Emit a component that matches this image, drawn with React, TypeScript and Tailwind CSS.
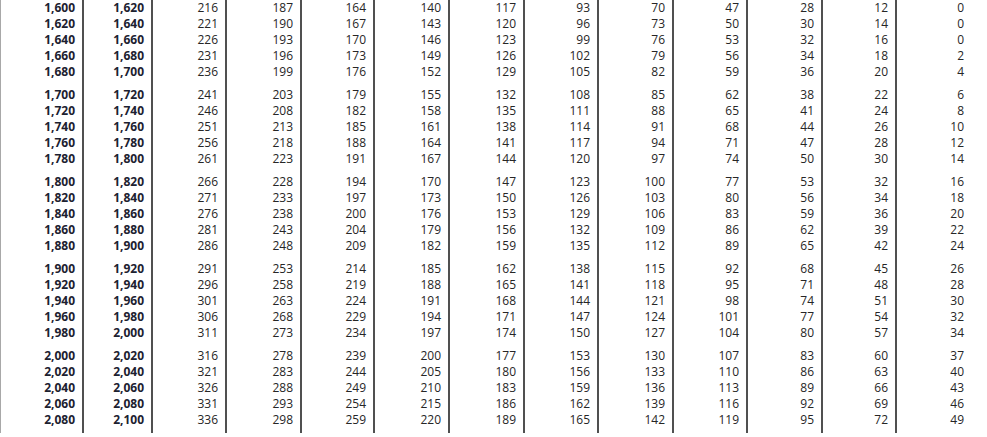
import React from "react";

// rows of the tax table: at least, but less than, then amounts per column
const rows: string[][] = [
  ["1,600", "1,620", "216", "187", "164", "140", "117", "93", "70", "47", "28", "12", "0"],
  ["1,620", "1,640", "221", "190", "167", "143", "120", "96", "73", "50", "30", "14", "0"],
  ["1,640", "1,660", "226", "193", "170", "146", "123", "99", "76", "53", "32", "16", "0"],
  ["1,660", "1,680", "231", "196", "173", "149", "126", "102", "79", "56", "34", "18", "2"],
  ["1,680", "1,700", "236", "199", "176", "152", "129", "105", "82", "59", "36", "20", "4"],
  ["1,700", "1,720", "241", "203", "179", "155", "132", "108", "85", "62", "38", "22", "6"],
  ["1,720", "1,740", "246", "208", "182", "158", "135", "111", "88", "65", "41", "24", "8"],
  ["1,740", "1,760", "251", "213", "185", "161", "138", "114", "91", "68", "44", "26", "10"],
  ["1,760", "1,780", "256", "218", "188", "164", "141", "117", "94", "71", "47", "28", "12"],
  ["1,780", "1,800", "261", "223", "191", "167", "144", "120", "97", "74", "50", "30", "14"],
  ["1,800", "1,820", "266", "228", "194", "170", "147", "123", "100", "77", "53", "32", "16"],
  ["1,820", "1,840", "271", "233", "197", "173", "150", "126", "103", "80", "56", "34", "18"],
  ["1,840", "1,860", "276", "238", "200", "176", "153", "129", "106", "83", "59", "36", "20"],
  ["1,860", "1,880", "281", "243", "204", "179", "156", "132", "109", "86", "62", "39", "22"],
  ["1,880", "1,900", "286", "248", "209", "182", "159", "135", "112", "89", "65", "42", "24"],
  ["1,900", "1,920", "291", "253", "214", "185", "162", "138", "115", "92", "68", "45", "26"],
  ["1,920", "1,940", "296", "258", "219", "188", "165", "141", "118", "95", "71", "48", "28"],
  ["1,940", "1,960", "301", "263", "224", "191", "168", "144", "121", "98", "74", "51", "30"],
  ["1,960", "1,980", "306", "268", "229", "194", "171", "147", "124", "101", "77", "54", "32"],
  ["1,980", "2,000", "311", "273", "234", "197", "174", "150", "127", "104", "80", "57", "34"],
  ["2,000", "2,020", "316", "278", "239", "200", "177", "153", "130", "107", "83", "60", "37"],
  ["2,020", "2,040", "321", "283", "244", "205", "180", "156", "133", "110", "86", "63", "40"],
  ["2,040", "2,060", "326", "288", "249", "210", "183", "159", "136", "113", "89", "66", "43"],
  ["2,060", "2,080", "331", "293", "254", "215", "186", "162", "139", "116", "92", "69", "46"],
  ["2,080", "2,100", "336", "298", "259", "220", "189", "165", "142", "119", "95", "72", "49"],
];

// widths written out so tailwind picks them up
const colClasses = [
  "w-[84px] border-l border-l-[#a8a8a8] border-r-2 border-r-[#505050] font-bold text-[#1c2130]",
  "w-[69px] border-r-2 border-r-[#505050] font-bold text-[#1c2130]",
  "w-[74px] border-r-2 border-r-[#505050]",
  "w-[75px] border-r-2 border-r-[#505050]",
  "w-[73px] border-r-2 border-r-[#505050]",
  "w-[75px] border-r-2 border-r-[#505050]",
  "w-[75px] border-r-2 border-r-[#505050]",
  "w-[74px] border-r-2 border-r-[#505050]",
  "w-[75px] border-r-2 border-r-[#505050]",
  "w-[74px] border-r-2 border-r-[#505050]",
  "w-[75px] border-r-2 border-r-[#505050]",
  "w-[74px] border-r-2 border-r-[#505050]",
  "w-[74px] pr-[1px]",
];

function Column(props: { index: number }) {
  const groups: string[][] = [];
  for (let g = 0; g < rows.length; g += 5) {
    groups.push(rows.slice(g, g + 5).map((r) => r[props.index]));
  }

  return (
    <div className={"flex h-[433px] shrink-0 flex-col gap-[7px] pr-[7px] text-right " + colClasses[props.index]}>
      {groups.map((group, gi) => (
        <div key={gi}>
          {group.map((value, vi) => (
            <div key={vi} className="h-4 leading-4">
              {value}
            </div>
          ))}
        </div>
      ))}
    </div>
  );
}

export default function App() {
  return (
    <div
      className="flex h-[437px] w-[987px] bg-white text-[12px] text-[#262626]"
      style={{ fontFamily: '"Open Sans", "DejaVu Sans", sans-serif' }}
    >
      {rows[0].map((_, i) => (
        <Column key={i} index={i} />
      ))}
    </div>
  );
}
